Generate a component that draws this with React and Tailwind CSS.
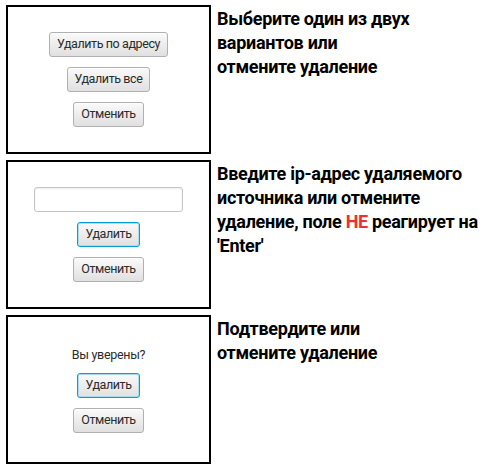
const BTN =
  'h-[25px] px-[7px] rounded-[3px] border border-[#b0b0b0] bg-gradient-to-b from-[#fafafa] to-[#e0e0e0] text-[12.5px] tracking-[-0.4px] leading-none text-[#2b2b2b] shadow-[inset_0_1px_0_#ffffff]';
const BTN_FOCUS =
  'h-[25px] px-[7px] rounded-[3px] border border-[#039ed3] bg-gradient-to-b from-[#fafafa] to-[#e0e0e0] text-[12.5px] tracking-[-0.4px] leading-none text-[#2b2b2b] shadow-[inset_0_0_0_1px_#a8dcf0]';

function Panel({ children }) {
  return (
    <div className="w-[205px] h-[149px] shrink-0 border-2 border-black bg-white flex flex-col items-center justify-center">
      {children}
    </div>
  );
}

function Note({ children }) {
  return (
    <div className="pt-[2px] font-['Roboto',sans-serif] font-bold text-[18px] leading-[24px] tracking-[-0.3px] text-black">
      {children}
    </div>
  );
}

export default function App() {
  return (
    <div className="w-[488px] h-[470px] bg-white pt-[5px] pl-[6px] flex flex-col gap-[6px] font-['Roboto',sans-serif]">
      <div className="flex gap-[6px]">
        <Panel>
          <div className="flex flex-col items-center gap-[10px]">
            <button className={BTN}>Удалить по адресу</button>
            <button className={BTN}>Удалить все</button>
            <button className={BTN}>Отменить</button>
          </div>
        </Panel>
        <Note>
          Выберите один из двух
          <br />
          вариантов или
          <br />
          отмените удаление
        </Note>
      </div>

      <div className="flex gap-[6px]">
        <Panel>
          <div className="flex flex-col items-center gap-[10px]">
            <input
              type="text"
              className="w-[149px] h-[25px] rounded-[3px] border border-[#c4c4c4] bg-white shadow-[inset_0_1px_2px_rgba(0,0,0,0.08)] outline-none"
            />
            <button className={BTN_FOCUS}>Удалить</button>
            <button className={BTN}>Отменить</button>
          </div>
        </Panel>
        <Note>
          Введите ip-адрес удаляемого
          <br />
          источника или отмените
          <br />
          удаление, поле <span className="text-[#f03030]">НЕ</span> реагирует на
          <br />
          'Enter'
        </Note>
      </div>

      <div className="flex gap-[6px]">
        <Panel>
          <div className="flex flex-col items-center gap-[10px]">
            <span className="text-[12.5px] tracking-[-0.3px] leading-[16px] text-[#2b2b2b]">Вы уверены?</span>
            <button className={BTN_FOCUS}>Удалить</button>
            <button className={BTN}>Отменить</button>
          </div>
        </Panel>
        <Note>
          Подтвердите или
          <br />
          отмените удаление
        </Note>
      </div>
    </div>
  );
}
